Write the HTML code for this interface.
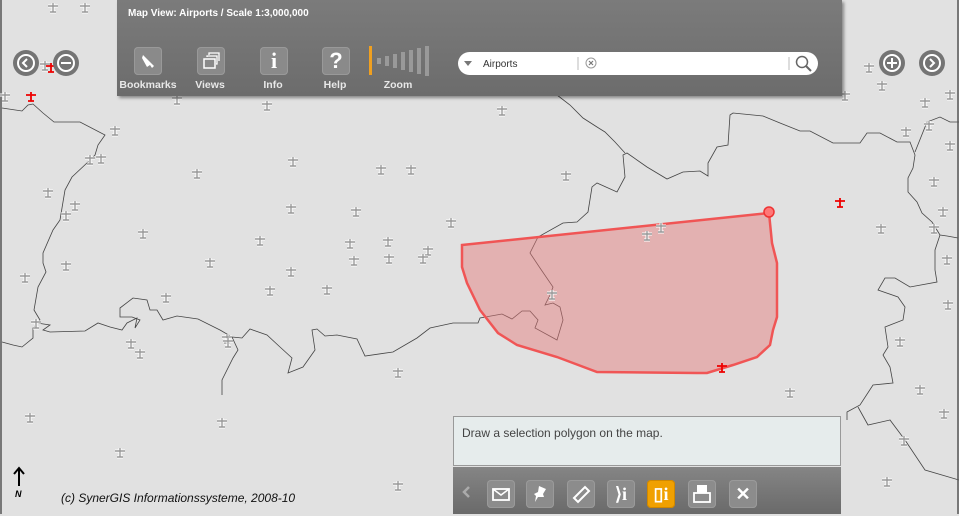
<!DOCTYPE html>
<html><head><meta charset="utf-8"><style>
body{margin:0;width:959px;height:514px;overflow:hidden;background:#e1e1e1;font-family:"Liberation Sans",sans-serif;position:relative}
#map{position:absolute;left:0;top:0}
.tb{position:absolute;left:117px;top:0;width:725px;height:96px;background:linear-gradient(#7b7b7b,#6c6c6c);box-shadow:2px 2px 3px rgba(0,0,0,.4)}
.title{position:absolute;left:11px;top:8px;color:#fff;font-size:10px;font-weight:bold}
.btn{position:absolute;top:47px;width:28px;height:28px;border-radius:4px;background:#8a8a8a;box-shadow:inset 0 0 0 1px #999;color:#fff;text-align:center}
.lbl{position:absolute;top:79px;color:#e8e8e8;font-size:10.5px;font-weight:bold;width:70px;text-align:center}
.search{position:absolute;left:341px;top:52px;width:360px;height:23px;background:#fff;border-radius:12px}
.circ{position:absolute;width:26px;height:26px;border-radius:50%;background:#747474;top:50px}
.circ i{position:absolute;left:4px;top:4px;width:14px;height:14px;border:2px solid #fff;border-radius:50%}
.panel{position:absolute;left:453px;top:416px;width:388px;height:98px}
.msg{position:absolute;left:0;top:0;height:50px;background:#e6ecec;border:1px solid #999;font-size:12px;color:#444;padding:9px 0 0 8px;box-sizing:border-box;width:388px}
.bar{position:absolute;left:0;top:51px;width:388px;height:47px;background:linear-gradient(#858585,#6a6a6a)}
.ib{position:absolute;top:13px;width:28px;height:28px;border-radius:4px;background:#8c8c8c;box-shadow:inset 0 0 0 1px #9a9a9a;color:#fff;font-weight:bold;text-align:center;font-size:18px;line-height:28px}
.copy{position:absolute;left:61px;top:491px;font-size:12px;font-style:italic;color:#111}
</style></head><body>
<svg id="map" width="959" height="514">
<defs><g id="ap"><path d="M-5 -2H5M0 -5V4M-3 4H3" stroke="#fff" stroke-width="3" fill="none"/><path d="M-5 -2H5M0 -5V4M-3 4H3" stroke="#999" stroke-width="1.4" fill="none"/></g>
<g id="apr"><path d="M-5 -2H5M0 -5V4M-3 4H3" stroke="#e00" stroke-width="1.8" fill="none"/></g></defs>
<g fill="none" stroke="#444" stroke-width="0.8">
<path d="M2 108L22 111L28 105L33 104L43 113L54 122L80 122L105 135L98 145L95 155L88 162L72 177L65 190L60 220L53 230L43 253L43 263L46 272L38 287L34 310L40 320L37 323L33 328L33 338L22 347L13 345L2 342"/>
<path d="M37 323L50 325L43 330L50 332L85 331L98 323L110 327L122 330L127 323L137 318L135 328L140 320L132 317L120 317L120 308L133 298L147 300L150 310L157 310L163 320L177 316L198 319L220 330L232 337L242 338L250 329L267 335L280 347L292 358L288 373L303 367L315 350L312 330L317 329L325 336L337 335L357 339L365 356L393 352L417 338L430 328L453 323L478 323L480 318L502 314L512 319L522 311L530 311L538 320L535 328L557 340L563 320L560 307L553 303L545 305L550 295L553 287L540 268L530 253L538 237L563 223L577 222L588 212L592 187L597 183L617 192L625 177L623 155L627 153L647 167L667 179L683 172L700 171L708 176L708 163L717 147L728 145L730 115L733 113L763 116L780 123L800 131L810 131L833 143L860 143L867 133L880 133L897 142L910 142L915 155L913 168L908 178L908 192L917 202L922 213L932 222L940 235L947 236L958 238"/>
<path d="M232 337L238 350L233 358L222 380L222 395"/>
<path d="M557 95L570 105L583 118L597 127L605 132L615 142L625 153"/>
<path d="M915 152L927 122L940 117L950 122L959 122"/>
<path d="M940 235L935 250L935 270L937 282L910 287L895 278L885 278L878 290L898 297L905 307L903 320L885 327L888 347L883 355L890 367L893 383L873 385L860 405L847 412L847 420"/>
<path d="M858 407L868 425L890 420L905 440L925 470L959 480"/>
</g>
<path d="M1 0V514M958 0V514" stroke="#555" stroke-width="1.5"/>
<path d="M462 245L769 213L772 243L777 263L777 317L773 330L770 345L757 357L733 365L707 373L697 373L597 372L557 357L517 345L498 333L480 310L467 283L462 267Z" fill="rgba(230,120,120,.45)" stroke="#f05555" stroke-width="2.5"/>
<circle cx="769" cy="212" r="5" fill="#f77" stroke="#e33" stroke-width="1.5"/>
<g>
<use href="#ap" x="53" y="8"/><use href="#ap" x="85" y="8"/><use href="#ap" x="5" y="97"/><use href="#ap" x="177" y="100"/><use href="#ap" x="267" y="106"/><use href="#ap" x="115" y="131"/><use href="#ap" x="101" y="159"/><use href="#ap" x="90" y="160"/><use href="#ap" x="293" y="162"/><use href="#ap" x="197" y="174"/><use href="#ap" x="381" y="170"/><use href="#ap" x="411" y="170"/><use href="#ap" x="502" y="111"/><use href="#ap" x="566" y="176"/><use href="#ap" x="48" y="193"/><use href="#ap" x="75" y="206"/><use href="#ap" x="66" y="216"/><use href="#ap" x="143" y="234"/><use href="#ap" x="291" y="209"/><use href="#ap" x="356" y="212"/><use href="#ap" x="451" y="223"/><use href="#ap" x="260" y="241"/><use href="#ap" x="350" y="244"/><use href="#ap" x="388" y="242"/><use href="#ap" x="428" y="251"/><use href="#ap" x="423" y="259"/><use href="#ap" x="354" y="261"/><use href="#ap" x="389" y="259"/><use href="#ap" x="210" y="263"/><use href="#ap" x="66" y="266"/><use href="#ap" x="25" y="278"/><use href="#ap" x="291" y="272"/><use href="#ap" x="270" y="291"/><use href="#ap" x="327" y="290"/><use href="#ap" x="166" y="298"/><use href="#ap" x="36" y="324"/><use href="#ap" x="131" y="344"/><use href="#ap" x="140" y="354"/><use href="#ap" x="227" y="339"/><use href="#ap" x="228" y="343"/><use href="#ap" x="398" y="373"/><use href="#ap" x="30" y="418"/><use href="#ap" x="222" y="423"/><use href="#ap" x="120" y="453"/><use href="#ap" x="398" y="486"/><use href="#ap" x="647" y="236"/><use href="#ap" x="661" y="228"/><use href="#ap" x="552" y="295"/><use href="#ap" x="790" y="393"/><use href="#ap" x="845" y="96"/><use href="#ap" x="925" y="103"/><use href="#ap" x="950" y="95"/><use href="#ap" x="906" y="132"/><use href="#ap" x="929" y="126"/><use href="#ap" x="950" y="146"/><use href="#ap" x="934" y="182"/><use href="#ap" x="943" y="212"/><use href="#ap" x="881" y="229"/><use href="#ap" x="947" y="260"/><use href="#ap" x="948" y="305"/><use href="#ap" x="900" y="342"/><use href="#ap" x="920" y="390"/><use href="#ap" x="944" y="414"/><use href="#ap" x="904" y="441"/><use href="#ap" x="887" y="482"/><use href="#ap" x="45" y="66"/><use href="#ap" x="869" y="68"/><use href="#ap" x="882" y="86"/><use href="#ap" x="934" y="229"/>
<use href="#apr" x="31" y="97"/><use href="#apr" x="840" y="203"/><use href="#apr" x="722" y="368"/><use href="#apr" x="51" y="68"/>
</g>
<path d="M19 468V486M14 474L19 468L24 474" stroke="#000" stroke-width="2" fill="none"/>
<text x="15" y="497" font-size="9" font-weight="bold" font-style="italic" font-family="Liberation Sans">N</text>
</svg>
<div class="circ" style="left:13px"><i></i><svg style="position:absolute;left:0;top:0" width="26" height="26"><path d="M14 9L10 13L14 17" stroke="#fff" stroke-width="2" fill="none"/></svg></div>
<div class="circ" style="left:53px"><i></i><svg style="position:absolute;left:0;top:0" width="26" height="26"><path d="M8 13H18" stroke="#fff" stroke-width="2"/></svg></div>
<div class="circ" style="left:879px"><i></i><svg style="position:absolute;left:0;top:0" width="26" height="26"><path d="M8 13H18M13 8V18" stroke="#fff" stroke-width="2"/></svg></div>
<div class="circ" style="left:919px"><i></i><svg style="position:absolute;left:0;top:0" width="26" height="26"><path d="M11 9L15 13L11 17" stroke="#fff" stroke-width="2" fill="none"/></svg></div>
<div class="tb">
<div class="title">Map View: Airports / Scale 1:3,000,000</div>
<div class="btn" style="left:17px"><svg width="28" height="28"><path d="M9 8L20 19L18 21L16 18L13 20L8 11Z" fill="#fff"/></svg></div>
<div class="btn" style="left:80px"><svg width="28" height="28"><rect x="7" y="12" width="11" height="9" fill="none" stroke="#fff" stroke-width="1.5"/><path d="M10 10V9H20V17H19M12 8V6H22V14" fill="none" stroke="#fff" stroke-width="1.3"/></svg></div>
<div class="btn" style="left:143px;font:bold 22px 'Liberation Serif',serif;line-height:28px">i</div>
<div class="btn" style="left:205px;font:bold 22px 'Liberation Sans',sans-serif;line-height:28px">?</div>
<div class="lbl" style="left:-4px">Bookmarks</div><div class="lbl" style="left:58px">Views</div><div class="lbl" style="left:121px">Info</div><div class="lbl" style="left:183px">Help</div><div class="lbl" style="left:246px">Zoom</div>
<svg style="position:absolute;left:250px;top:46px" width="64" height="32"><rect x="2" y="0" width="3" height="29" fill="#f0a020"/><rect x="10" y="12" width="4" height="6" fill="#999"/><rect x="18" y="10" width="4" height="10" fill="#999"/><rect x="26" y="8" width="4" height="14" fill="#999"/><rect x="34" y="6" width="4" height="18" fill="#999"/><rect x="42" y="4" width="4" height="22" fill="#999"/><rect x="50" y="2" width="4" height="26" fill="#999"/><rect x="58" y="0" width="4" height="30" fill="#999"/></svg>
<div class="search"><svg style="position:absolute;left:0;top:0" width="360" height="23"><path d="M6 9H14L10 14Z" fill="#777"/><text x="25" y="15" font-size="10" fill="#333" font-family="Liberation Sans">Airports</text><path d="M120 5V18M331 5V18" stroke="#bbb"/><circle cx="133" cy="11" r="5" fill="none" stroke="#999"/><path d="M131 9L135 13M135 9L131 13" stroke="#777" stroke-width="1.2"/><circle cx="344" cy="10" r="5.5" fill="none" stroke="#666" stroke-width="1.5"/><path d="M348 14L353 19" stroke="#666" stroke-width="2"/></svg></div>
</div>
<div class="panel">
<div class="msg">Draw a selection polygon on the map.</div>
<div class="bar">
<svg style="position:absolute;left:8px;top:17px" width="12" height="16"><path d="M8 3L3 8L8 13" stroke="#aaa" stroke-width="2.5" fill="none"/></svg>
<div class="ib" style="left:34px"><svg width="28" height="28"><rect x="6" y="9" width="16" height="11" fill="none" stroke="#fff" stroke-width="1.8"/><path d="M6 9L14 15L22 9" stroke="#fff" stroke-width="1.5" fill="none"/></svg></div>
<div class="ib" style="left:73px"><svg width="28" height="28"><path d="M13 6L20 9L17 14L18 17L12 17L9 22L10 16L8 14L12 12Z" fill="#fff"/></svg></div>
<div class="ib" style="left:114px"><svg width="28" height="28"><path d="M7 18L18 7L22 11L11 22Z" fill="none" stroke="#fff" stroke-width="2"/></svg></div>
<div class="ib" style="left:154px;font-family:'Liberation Serif',serif">⟩i</div>
<div class="ib" style="left:194px;background:#f0a000;box-shadow:inset 0 0 0 1px #d08800;font-family:'Liberation Serif',serif">▯i</div>
<div class="ib" style="left:235px"><svg width="28" height="28"><rect x="9" y="5" width="10" height="8" fill="#fff"/><rect x="6" y="13" width="16" height="9" fill="none" stroke="#fff" stroke-width="1.8"/></svg></div>
<div class="ib" style="left:276px">✕</div>
</div></div>
<div class="copy">(c) SynerGIS Informationssysteme, 2008-10</div>
</body></html>
